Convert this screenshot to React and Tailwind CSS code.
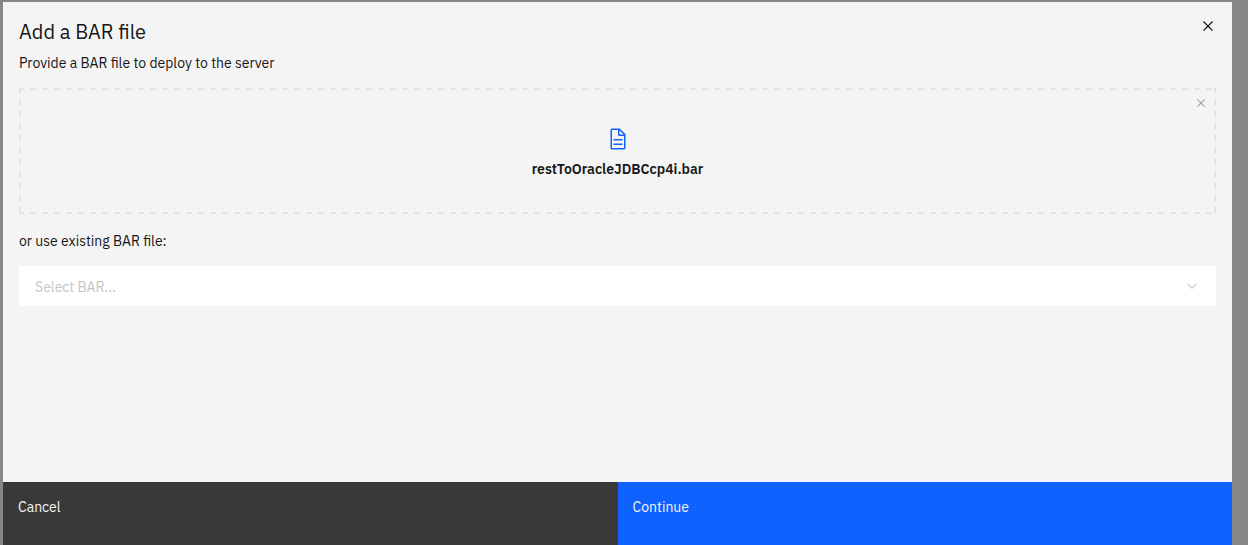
import { useState } from 'react'

function CloseIcon({ className }) {
  return (
    <svg viewBox="0 0 32 32" fill="currentColor" className={className} aria-hidden="true">
      <path d="M24 9.4L22.6 8 16 14.6 9.4 8 8 9.4 14.6 16 8 22.6 9.4 24 16 17.4 22.6 24 24 22.6 17.4 16 24 9.4z" />
    </svg>
  )
}

function DocumentIcon({ className }) {
  return (
    <svg viewBox="0 0 32 32" fill="currentColor" className={className} aria-hidden="true">
      <path d="M25.7 9.3l-7-7C18.5 2.1 18.3 2 18 2H8C6.9 2 6 2.9 6 4v24c0 1.1.9 2 2 2h16c1.1 0 2-.9 2-2V10c0-.3-.1-.5-.3-.7zM18 4.4l5.6 5.6H18V4.4zM24 28H8V4h8v6c0 1.1.9 2 2 2h6v16z" />
      <path d="M10 22h12v2H10zM10 16h12v2H10z" />
    </svg>
  )
}

function ChevronDown({ className }) {
  return (
    <svg viewBox="0 0 16 16" fill="currentColor" className={className} aria-hidden="true">
      <path d="M8 11L3 6 3.7 5.3 8 9.6 12.3 5.3 13 6z" />
    </svg>
  )
}

// Widely spaced dashed frame: 6px dashes with 6px gaps.
function DashedFrame() {
  return (
    <svg className="pointer-events-none absolute inset-0 size-full" fill="none" stroke="#dde5eb" aria-hidden="true">
      <g strokeWidth="4" strokeDasharray="6 6" strokeDashoffset="1">
        <line x1="0" y1="0" x2="100%" y2="0" />
        <line x1="0" y1="100%" x2="100%" y2="100%" />
        <line x1="0" y1="0" x2="0" y2="100%" />
        <line x1="100%" y1="0" x2="100%" y2="100%" />
      </g>
    </svg>
  )
}

export default function App() {
  const [file, setFile] = useState('restToOracleJDBCcp4i.bar')

  return (
    <div className="flex min-h-screen bg-[#868686] pt-0.5 pr-4 pl-[3px] font-['IBM_Plex_Sans',Roboto,sans-serif] text-[#161616]">
      <section role="dialog" aria-labelledby="dialog-title" className="flex flex-1 flex-col bg-[#f4f4f4]">
        <div className="flex-1 px-4 pt-3.5">
          <header className="flex items-start justify-between">
            <div className="pt-0.5">
              <h1 id="dialog-title" className="text-xl leading-7">Add a BAR file</h1>
              <p className="mt-[7px] text-sm">Provide a BAR file to deploy to the server</p>
            </div>
            <button type="button" aria-label="Close" className="-mr-0.5">
              <CloseIcon className="size-5" />
            </button>
          </header>

          <div className="relative mt-[15px] flex h-[126px] flex-col items-center pt-[39px]">
            <DashedFrame />
            <DocumentIcon className="size-6 text-[#0f62fe]" />
            <p className="mt-2 text-sm font-semibold">{file}</p>
            <button
              type="button"
              aria-label="Remove file"
              onClick={() => setFile('')}
              className="absolute top-[7px] right-[7px] text-[#98a2aa]"
            >
              <CloseIcon className="size-4" />
            </button>
          </div>

          <label htmlFor="existing-bar" className="mt-4 block text-sm leading-[22px]">or use existing BAR file:</label>
          <div className="mt-3.5 grid items-center bg-white">
            <select
              id="existing-bar"
              defaultValue=""
              className="col-start-1 row-start-1 h-10 w-full appearance-none bg-transparent px-4 pt-0.5 text-sm text-[#c6c6c6]"
            >
              <option value="">Select BAR...</option>
            </select>
            <ChevronDown className="pointer-events-none col-start-1 row-start-1 mr-4 size-4 justify-self-end text-[#c6c6c6]" />
          </div>
        </div>

        <footer className="grid h-[63px] grid-cols-2 text-sm text-[#f4f4f4]">
          <button type="button" className="flex items-start bg-[#393939] px-[15px] pt-[15px]">Cancel</button>
          <button type="button" className="flex items-start bg-[#0f62fe] px-[15px] pt-[15px]">Continue</button>
        </footer>
      </section>
    </div>
  )
}
